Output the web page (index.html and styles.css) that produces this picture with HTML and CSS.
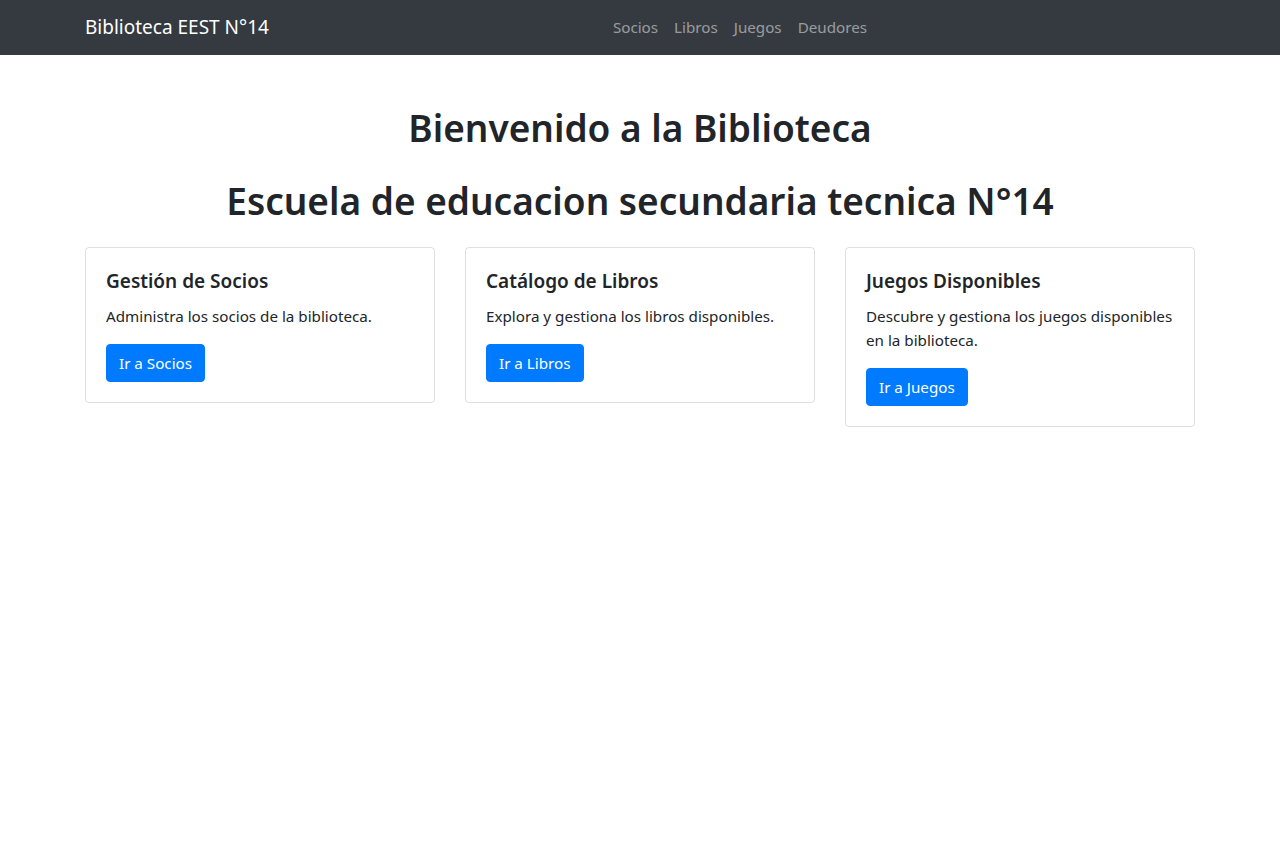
FILE: index.html
```html
<!DOCTYPE html>
<html lang="es">
<head>
<meta charset="utf-8">
<title>Biblioteca EEST N°14</title>
<link rel="stylesheet" href="styles.css">
</head>
<body>
<nav class="navbar">
  <div class="nav-container">
    <a class="brand" href="#">Biblioteca EEST N°14</a>
    <ul class="nav-links">
      <li><a href="#">Socios</a></li>
      <li><a href="#">Libros</a></li>
      <li><a href="#">Juegos</a></li>
      <li><a href="#">Deudores</a></li>
    </ul>
  </div>
</nav>
<main class="container">
  <h1 class="title title-first">Bienvenido a la Biblioteca</h1>
  <h1 class="title title-second">Escuela de educacion secundaria tecnica N°14</h1>
  <div class="cards">
    <div class="card">
      <h5 class="card-title">Gestión de Socios</h5>
      <p class="card-text">Administra los socios de la biblioteca.</p>
      <a class="btn" href="#">Ir a Socios</a>
    </div>
    <div class="card">
      <h5 class="card-title">Catálogo de Libros</h5>
      <p class="card-text">Explora y gestiona los libros disponibles.</p>
      <a class="btn" href="#">Ir a Libros</a>
    </div>
    <div class="card">
      <h5 class="card-title">Juegos Disponibles</h5>
      <p class="card-text">Descubre y gestiona los juegos disponibles en la biblioteca.</p>
      <a class="btn" href="#">Ir a Juegos</a>
    </div>
  </div>
</main>
</body>
</html>
```

FILE: styles.css
```css
* { box-sizing: border-box; }
body {
  margin: 0;
  font-family: "Noto Sans", "Open Sans", sans-serif;
  font-size: 15.2px;
  line-height: 24px;
  color: #212529;
  background: #fff;
}
.navbar {
  background: #343a40;
  padding: 8px 0;
}
.nav-container {
  width: 1140px;
  margin: 0 auto;
  padding: 0 15px;
  display: flex;
  align-items: center;
}
.brand {
  color: #fff;
  text-decoration: none;
  font-size: 19px;
  line-height: 29px;
  padding: 5px 0;
  margin-right: 16px;
}
.nav-links {
  list-style: none;
  margin: 0 auto;
  padding: 0;
  display: flex;
}
.nav-links a {
  display: block;
  padding: 8px;
  line-height: 23px;
  color: rgba(255,255,255,.5);
  text-decoration: none;
}
.container {
  width: 1140px;
  margin: 0 auto;
  padding: 49px 15px 0;
}
.title {
  font-size: 37px;
  font-weight: 600;
  line-height: 48px;
  text-align: center;
  margin: 0;
}
.title-first { margin-bottom: 25px; }
.title-second { margin-bottom: 22px; }
.cards {
  display: grid;
  grid-template-columns: repeat(3, 1fr);
  gap: 30px;
  align-items: start;
}
.card {
  border: 1px solid rgba(0,0,0,.125);
  border-radius: 4px;
  padding: 20px;
}
.card-title {
  font-size: 19px;
  font-weight: 600;
  line-height: 24px;
  margin: 1px 0 11px;
}
.card-text {
  margin: 0 0 16px;
}
.btn {
  display: inline-block;
  background: #007bff;
  color: #fff;
  text-decoration: none;
  padding: 6px 12px;
  border-radius: 4px;
  line-height: 24px;
  border: 1px solid #007bff;
}
```
